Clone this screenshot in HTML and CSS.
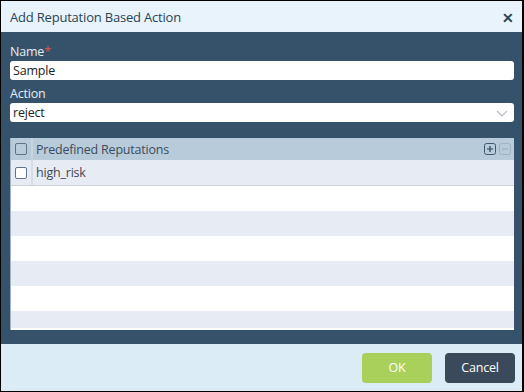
FILE: index.html
```html
<!DOCTYPE html>
<html lang="en">
<head>
    <meta charset="UTF-8">
    <title>Add Reputation Based Action</title>
    <link rel="stylesheet" href="styles.css">
</head>
<body>
    <div class="dialog">
        <div class="dialog-header">
            <span class="dialog-title">Add Reputation Based Action</span>
            <span class="close">&#x2715;</span>
        </div>
        <div class="dialog-body">
            <label class="field-label">Name<span class="req">*</span></label>
            <div class="input">Sample</div>
            <label class="field-label">Action</label>
            <div class="input select">reject
                <svg class="chevron" width="12" height="7" viewBox="0 0 12 7"><path d="M1 1l5 5 5-5" fill="none" stroke="#b5bcc4" stroke-width="1.2"/></svg>
            </div>
            <div class="grid">
                <div class="grid-row grid-head">
                    <div class="cell-check"><span class="box"></span></div>
                    <div class="cell-text">Predefined Reputations</div>
                    <div class="grid-tools">
                        <svg class="tool" width="12" height="12" viewBox="0 0 12 12"><rect x="0.5" y="0.5" width="11" height="11" rx="2" fill="none" stroke="#3f5870"/><path d="M3 6h6M6 3v6" stroke="#2e4458" stroke-width="1.2"/></svg>
                        <svg class="tool" width="12" height="12" viewBox="0 0 12 12"><rect x="0.5" y="0.5" width="11" height="11" rx="2" fill="none" stroke="#9fb2c3"/><path d="M3 6h6" stroke="#9fb2c3" stroke-width="1.2"/></svg>
                    </div>
                </div>
                <div class="grid-row item">
                    <div class="cell-check"><span class="box"></span></div>
                    <div class="cell-text">high_risk</div>
                </div>
                <div class="grid-row empty"></div>
                <div class="grid-row empty alt"></div>
                <div class="grid-row empty"></div>
                <div class="grid-row empty alt"></div>
                <div class="grid-row empty"></div>
                <div class="grid-row empty alt last"></div>
            </div>
        </div>
        <div class="dialog-footer">
            <button class="btn ok">OK</button>
            <button class="btn cancel">Cancel</button>
        </div>
    </div>
</body>
</html>
```

FILE: styles.css
```css
body {
    margin: 0;
    font-family: "Open Sans", Arial, sans-serif;
    font-size: 12px;
    background: #000;
}
.dialog {
    width: 521px;
    height: 390px;
    margin: 1px 2px 1px 1px;
    display: flex;
    flex-direction: column;
    background: #36526a;
}
.dialog-header {
    height: 31px;
    background: #e8f3fc;
    display: flex;
    align-items: center;
    justify-content: space-between;
    padding: 0 8px 0 9px;
}
.dialog-title {
    font-size: 13px;
    font-weight: 500;
    color: #2a4357;
    letter-spacing: -0.2px;
}
.close {
    font-size: 14px;
    font-weight: 700;
    color: #2a4357;
    margin-top: 2px;
}
.dialog-body {
    flex: 1;
    padding: 12px 8px 14px 9px;
    display: flex;
    flex-direction: column;
}
.field-label {
    color: #e6edf3;
    font-size: 12.5px;
    line-height: 15px;
    font-weight: 500;
    letter-spacing: -0.2px;
}
.req {
    color: #d9534f;
}
.input {
    height: 19px;
    margin: 2px 0 6px;
    background: #fff;
    border-radius: 3px;
    color: #222;
    font-size: 12.5px;
    line-height: 19px;
    padding-left: 3px;
    position: relative;
    letter-spacing: -0.2px;
}
.select {
    margin-bottom: 16px;
}
.chevron {
    position: absolute;
    right: 6px;
    top: 7px;
}
.grid {
    flex: 1;
    background: #fff;
    display: flex;
    flex-direction: column;
    border-left: 1px solid #9fb4c6;
}
.grid-row {
    display: flex;
    align-items: center;
    height: 25px;
}
.grid-row.alt {
    background: #e7ecf4;
}
.grid-row.last {
    height: 17px;
    border-bottom: 1px solid #fff;
}
.grid-head {
    height: 22px;
    background: #b8cbdb;
}
.item {
    height: 25px;
    background: #e7ecf4;
    border-bottom: 1px solid #cfd3d8;
}
.cell-check {
    width: 20px;
    height: 100%;
    display: flex;
    align-items: center;
    justify-content: center;
    border-right: 2px solid #d8dde3;
}
.grid-head .cell-check {
    border-right-color: #c8d5e0;
}
.box {
    width: 10px;
    height: 10px;
    border: 1px solid #5f7385;
    border-radius: 2px;
    background: #fff;
}
.grid-head .box {
    background: transparent;
}
.cell-text {
    flex: 1;
    padding-left: 3px;
    color: #3d4c5c;
    font-size: 12.5px;
    letter-spacing: -0.2px;
}
.item .cell-text {
    color: #3f4652;
}
.grid-tools {
    display: flex;
    gap: 3px;
    padding-right: 3px;
}
.tool {
    display: block;
}
.dialog-footer {
    height: 47px;
    background: #dcecf7;
    display: flex;
    justify-content: flex-end;
    align-items: center;
    gap: 13px;
    padding-right: 7px;
}
.btn {
    height: 30px;
    width: 70px;
    border: none;
    border-radius: 4px;
    color: #fff;
    font-family: "Open Sans", Arial, sans-serif;
    font-size: 12.5px;
    letter-spacing: -0.2px;
}
.ok {
    background: #a8d05a;
}
.cancel {
    background: #3b4a5a;
}
```
